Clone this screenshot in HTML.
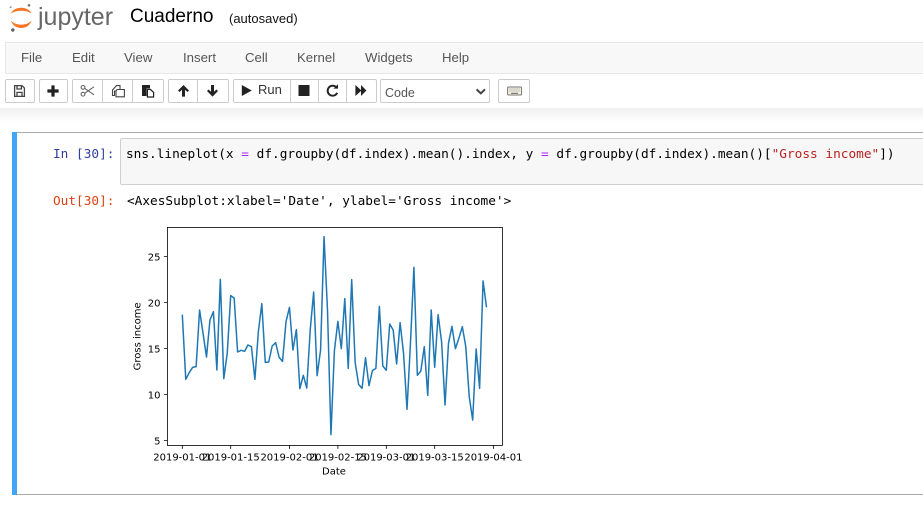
<!DOCTYPE html>
<html><head><meta charset="utf-8"><title>Cuaderno</title>
<style>
html,body{margin:0;padding:0;background:#fff;width:923px;height:524px;overflow:hidden}
body{position:relative;font-family:"Liberation Sans",sans-serif;color:#333}
.a{position:absolute;white-space:pre}
.m{top:48px;font-size:13.2px;line-height:20px;color:#555}
.b{position:absolute;top:79px;height:22px;border:1px solid #ccc;background:#fff;box-sizing:content-box;border-radius:2px}
.mono{font-family:"DejaVu Sans Mono","Liberation Mono",monospace;font-size:12.77px;line-height:17px}
svg{position:absolute;left:0;top:0}
</style></head><body>
<div class="a" style="left:38px;top:3px;font-size:25px;line-height:29px;color:#666">jupyter</div>
<div class="a" style="left:130px;top:5px;font-size:19px;line-height:24px;color:#000">Cuaderno</div>
<div class="a" style="left:229px;top:10px;font-size:13px;line-height:17px;color:#111">(autosaved)</div>

<div class="a" style="left:5px;top:42px;width:918px;height:30px;background:#f8f8f8;border:1px solid #e7e7e7;border-right:0;box-sizing:content-box"></div>
<div class="a m" style="left:21px">File</div>
<div class="a m" style="left:72px">Edit</div>
<div class="a m" style="left:124px">View</div>
<div class="a m" style="left:183px">Insert</div>
<div class="a m" style="left:245px">Cell</div>
<div class="a m" style="left:297px">Kernel</div>
<div class="a m" style="left:365px">Widgets</div>
<div class="a m" style="left:442px">Help</div>

<div class="a" style="left:0;top:108px;width:923px;height:14px;background:linear-gradient(#f0f0f0,#fff)"></div>

<div class="b" style="left:5px;width:28px"></div>
<div class="b" style="left:39px;width:27px"></div>
<div class="b" style="left:72px;width:90px"></div>
<div class="b" style="left:168px;width:59px"></div>
<div class="b" style="left:233px;width:142px"></div>
<div class="b" style="left:380px;width:108px;background:#fff"></div>
<div class="b" style="left:498px;width:30px"></div>
<div class="a" style="left:258px;top:81px;font-size:13px;line-height:18px;color:#333">Run</div>
<div class="a" style="left:385px;top:85px;font-size:12.5px;line-height:16px;color:#555">Code</div>

<div class="a" style="left:12px;top:132px;width:911px;height:363px;border-top:1px solid #ababab;border-bottom:1px solid #ababab;box-sizing:border-box"></div>
<div class="a" style="left:12px;top:132px;width:5px;height:363px;background:#42a5f5"></div>
<div class="a" style="left:120px;top:138px;width:803px;height:47px;background:#f7f7f7;border:1px solid #cfcfcf;border-right:0;box-sizing:border-box;border-radius:2px 0 0 2px"></div>
<div class="a mono" style="left:53px;top:146px;color:#303f9f">In [30]:</div>
<div class="a mono" style="left:126px;top:146px;color:#000">sns.lineplot(x <span style="color:#a2f">=</span> df.groupby(df.index).mean().index, y <span style="color:#a2f">=</span> df.groupby(df.index).mean()[<span style="color:#ba2121">"Gross income"</span>])</div>
<div class="a mono" style="left:53px;top:193px;color:#d84315">Out[30]:</div>
<div class="a mono" style="left:127px;top:193px;color:#000">&lt;AxesSubplot:xlabel='Date', ylabel='Gross income'&gt;</div>

<svg width="923" height="524" viewBox="0 0 923 524" xmlns="http://www.w3.org/2000/svg">
  <!-- logo -->
  <path d="M10.8 13.6C13 9.4 17 7.8 21.3 7.8S29.6 9.4 31.6 13.6C28.5 11.6 25 10.8 21.3 10.8S14 11.6 10.8 13.6Z" fill="#f37726"/>
  <path d="M10.8 20.6C13 26 17 28 21.3 28S29.6 26 31.6 20.6C28.5 23.6 25 24.6 21.3 24.6S14 23.6 10.8 20.6Z" fill="#f37726"/>
  <circle cx="29" cy="5.3" r="1.3" fill="#767677"/><circle cx="10.6" cy="7.2" r="1" fill="#989798"/><circle cx="12.8" cy="30" r="1.7" fill="#616262"/>

  <!-- toolbar dividers -->
  <g stroke="#ccc"><path d="M102.5 80V102M132.5 80V102M197.5 80V102M290.5 80V102M318.5 80V102M346.5 80V102"/></g>

  <!-- save -->
  <g fill="none" stroke="#444" stroke-width="1.3"><path d="M14.6 85.6H22L24.4 88V96.4H14.6Z"/><path d="M17 85.8V89H21.4V85.8M17 96.2V92.4H22V96.2"/></g>
  <!-- plus -->
  <path d="M51.4 85.4H54.6V89.4H58.6V92.6H54.6V96.6H51.4V92.6H47.4V89.4H51.4Z" fill="#222"/>
  <!-- scissors -->
  <g fill="none" stroke="#666" stroke-width="1.1"><circle cx="83" cy="87.4" r="1.9"/><circle cx="83" cy="94.2" r="1.9"/><path d="M84.8 88.4L94 94.8M84.8 93.2L94 86.8"/></g>
  <!-- copy -->
  <path d="M112.5 90L116.5 85.6H120V91H114.5V95.5H112.5Z" fill="#fff" stroke="#444" stroke-width="1.1"/>
  <path d="M117 89.5L120 89.5H124.4V96.8H116V91Z" fill="#fff" stroke="#444" stroke-width="1.1"/>
  <!-- paste -->
  <path d="M142 85H150V88.4H146.6V96H142Z" fill="#222"/><path d="M147.4 89.4H150.4L153.6 92.4V97H147.4Z" fill="#fff" stroke="#222" stroke-width="1.2"/>
  <!-- up/down -->
  <path d="M183.5 85L189 90.5L187.4 92L185 89.7V96.6H182V89.7L179.6 92L178 90.5Z" fill="#222"/>
  <path d="M212.5 96.6L218 91L216.4 89.5L214 91.8V85H211V91.8L208.6 89.5L207 91Z" fill="#222"/>
  <!-- play -->
  <path d="M241.8 85V96L251.8 90.5Z" fill="#222"/>
  <!-- stop -->
  <rect x="298.5" y="85" width="11" height="11" fill="#222"/>
  <!-- restart -->
  <path d="M336.4 87.4A5 5 0 1 0 337.2 92.8" fill="none" stroke="#222" stroke-width="1.9"/><path d="M333.5 88.6H338V84.2Z" fill="#222"/>
  <!-- ff -->
  <path d="M355.4 85V96L361 90.9V96L366.4 90.5L361 85V90.1Z" fill="#222"/>
  <!-- chevron -->
  <path d="M476.6 89.4L480.8 93.4L485 89.4" fill="none" stroke="#444" stroke-width="2"/>
  <!-- keyboard -->
  <rect x="507.6" y="87" width="14" height="8" rx="1" fill="#f4efd8" stroke="#777" stroke-width="1"/>
  <path d="M509.5 89H520M509.5 91H520" stroke="#8a9ab0" stroke-width="1" stroke-dasharray="1 1"/><path d="M511 93.3H518" stroke="#666"/>

  <!-- plot -->
  <polyline transform="translate(182.3 230) scale(3.457 .33333)" vector-effect="non-scaling-stroke" fill="none" stroke="#1f77b4" stroke-width="1.5" stroke-linejoin="round" points="0,254 1,448 2,428 3,412 4,410 5,240 6,310 7,381 8,270 9,245 10,420 11,148 12,446 13,370 14,197 15,204 16,366 17,361 18,364 19,345 20,350 21,448 22,305 23,221 24,397 25,396 26,348 27,338 28,382 29,394 30,275 31,232 32,360 33,299 34,476 35,436 36,474 37,300 38,186 39,437 40,360 41,20 42,240 43,614 44,362 45,274 46,356 47,206 48,415 49,149 50,397 51,463 52,475 53,383 54,467 55,422 56,415 57,229 58,408 59,421 60,282 61,300 62,402 63,278 64,370 65,538 66,340 67,112 68,436 69,423 70,350 71,496 72,240 73,412 74,254 75,335 76,525 77,340 78,289 79,356 80,325 81,290 82,350 83,500 84,570 85,357 86,475 87,153 88,232"/>
  <rect x="167.4" y="227.4" width="335" height="218" fill="none" stroke="#000" stroke-width=".8"/>
  <g stroke="#000" stroke-width=".8">
    <path d="M182.3 445.4v3.5M230.7 445.4v3.5M289.5 445.4v3.5M337.9 445.4v3.5M386.3 445.4v3.5M434.7 445.4v3.5M493.4 445.4v3.5"/>
    <path d="M167.4 256.4h-3.5M167.4 302.4h-3.5M167.4 348.4h-3.5M167.4 394.4h-3.5M167.4 440.4h-3.5"/>
  </g>
  <g font-family="'DejaVu Sans',sans-serif" font-size="10" fill="#000" text-anchor="end">
    <text x="160.5" y="260.3">25</text><text x="160.5" y="306.3">20</text><text x="160.5" y="352.3">15</text><text x="160.5" y="398.3">10</text><text x="160.5" y="444.3">5</text>
  </g>
  <g font-family="'DejaVu Sans',sans-serif" font-size="10" fill="#000" text-anchor="middle">
    <text x="182.3" y="460.5">2019-01-01</text><text x="230.7" y="460.5">2019-01-15</text><text x="289.5" y="460.5">2019-02-01</text><text x="337.9" y="460.5">2019-02-15</text><text x="386.3" y="460.5">2019-03-01</text><text x="434.7" y="460.5">2019-03-15</text><text x="493.4" y="460.5">2019-04-01</text>
    <text x="334" y="474.5">Date</text>
    <text transform="translate(140.5 336.4) rotate(-90)">Gross income</text>
  </g>
</svg>
</body></html>
